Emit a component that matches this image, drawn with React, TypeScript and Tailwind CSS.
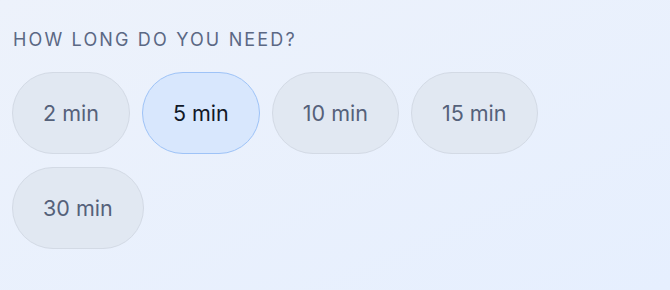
import React from "react";

const options = ["2 min", "5 min", "10 min", "15 min", "30 min"];

export default function App() {
  const selected = "5 min";
  return (
    <div
      className="w-[670px] h-[290px] bg-gradient-to-br from-[#edf2fb] to-[#e6effe] px-3 pt-[30px]"
      style={{ fontFamily: "Inter, 'Noto Sans', sans-serif" }}
    >
      <div className="text-[18px] leading-5 tracking-[0.12em] text-[#5b6884] font-normal pl-[1px]">
        HOW LONG DO YOU NEED?
      </div>
      <div className="mt-[22px] flex flex-wrap gap-x-3 gap-y-[13px] w-[540px]">
        {options.map((o) => {
          const sel = o === selected;
          return (
            <button
              key={o}
              className={
                sel
                  ? "h-[82px] px-[30px] rounded-full border border-[#9ec3f7] bg-[#d8e7fd] text-[21.5px] text-[#111827]"
                  : "h-[82px] px-[30px] rounded-full border border-[#d3dae5] bg-[#e1e8f2] text-[21.5px] text-[#55617a]"
              }
            >
              {o}
            </button>
          );
        })}
      </div>
    </div>
  );
}
